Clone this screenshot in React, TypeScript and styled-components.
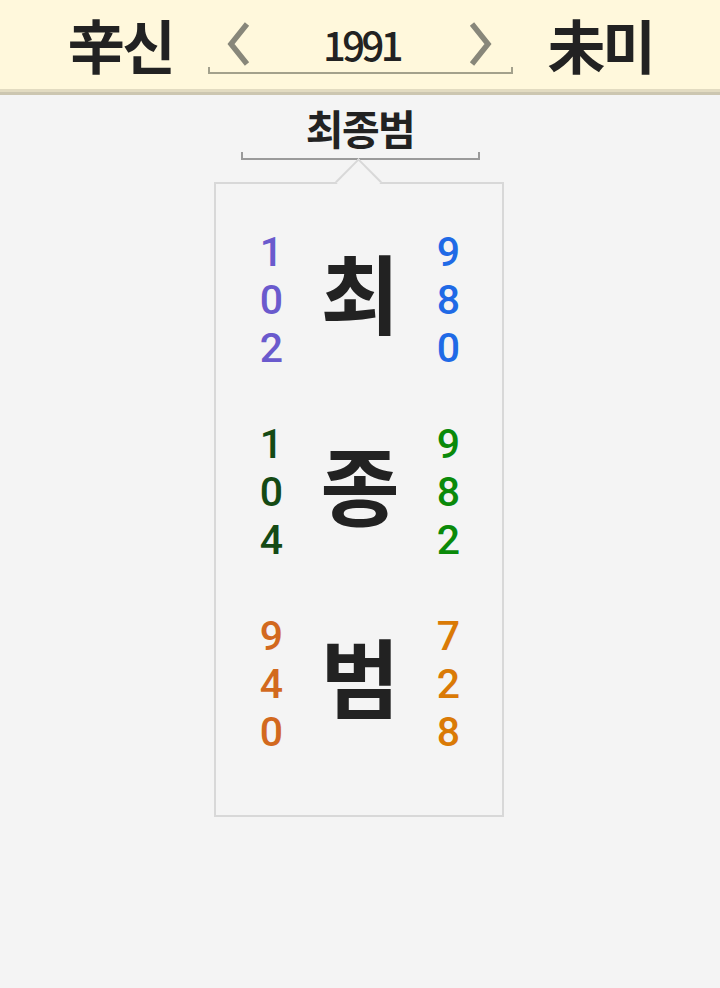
import React from "react";
import styled, { createGlobalStyle } from "styled-components";

const Global = createGlobalStyle`
  html, body { margin: 0; padding: 0; background: #f4f4f4; }
  body { font-family: "Noto Sans CJK KR", "Noto Sans", sans-serif; color: #222; }
`;

const Page = styled.div`
  width: 720px;
  min-height: 988px;
  background: #f4f4f4;
  display: flex;
  flex-direction: column;
  align-items: center;
`;

const Header = styled.header`
  align-self: stretch;
  height: 89px;
  background: #fff8dc;
  border-bottom: 3px solid #e2dbc1;
  box-shadow: 0 3px 0 #ccc6b0;
  display: flex;
  align-items: center;
  justify-content: center;
  gap: 35px;
`;

const Pillar = styled.div`
  font-size: 58px;
  font-weight: 700;
  line-height: 1;
  color: #222;
  letter-spacing: -3px;
  margin-top: -2px;
`;

const Nav = styled.div`
  width: 305px;
  display: flex;
  flex-direction: column;
  margin-top: 6px;
`;

const NavRow = styled.div`
  display: flex;
  align-items: center;
  justify-content: space-between;
  padding: 0 20px 0 19px;
  height: 46px;
`;

const Year = styled.div`
  font-size: 40px;
  line-height: 1;
  font-weight: 500;
  letter-spacing: -3.5px;
  color: #222;
  margin-left: 4px;
`;

const Bracket = styled.div<{ $w: number; $c: string; $h: number }>`
  width: ${(p) => p.$w}px;
  height: ${(p) => p.$h}px;
  box-sizing: border-box;
  border: 2px solid ${(p) => p.$c};
  border-top: none;
`;

const Title = styled.div`
  margin-top: 10px;
  font-size: 41px;
  font-weight: 700;
  line-height: 50px;
  letter-spacing: -1.5px;
  color: #222;
`;

const Card = styled.section`
  position: relative;
  margin-top: 22px;
  margin-right: 3px;
  width: 290px;
  height: 635px;
  box-sizing: border-box;
  border: 2px solid #d8d8d8;
  background: #f4f4f4;
  padding: 20px 33px 0 36px;
  display: flex;
  flex-direction: column;
  &::before {
    content: "";
    position: absolute;
    left: 50%;
    top: -19px;
    width: 33px;
    height: 33px;
    margin-left: -17px;
    box-sizing: border-box;
    background: #f4f4f4;
    border-top: 2px solid #d8d8d8;
    border-left: 2px solid #d8d8d8;
    transform: rotate(45deg);
  }
`;

const Row = styled.div`
  height: 192px;
  display: flex;
  align-items: center;
  justify-content: space-between;
`;

const Digits = styled.div<{ $c: string }>`
  display: flex;
  flex-direction: column;
  align-items: center;
  width: 40px;
  font-family: Roboto, "Noto Sans", sans-serif;
  font-size: 41px;
  line-height: 48px;
  font-weight: 500;
  color: ${(p) => p.$c};
`;

const Glyph = styled.div`
  font-size: 86px;
  font-weight: 700;
  line-height: 1;
  color: #222;
  white-space: nowrap;
  padding-bottom: 18px;
`;

const Chevron = ({ dir }: { dir: "l" | "r" }) => (
  <svg width="24" height="44" viewBox="0 0 24 44">
    <polyline
      points={dir === "l" ? "20,2 4,22 20,42" : "4,2 20,22 4,42"}
      fill="none"
      stroke="#88877a"
      strokeWidth="5.5"
    />
  </svg>
);

const rows = [
  { ch: "최", l: ["1", "0", "2"], r: ["9", "8", "0"], lc: "#6a5acd", rc: "#1f6ae6" },
  { ch: "종", l: ["1", "0", "4"], r: ["9", "8", "2"], lc: "#144a14", rc: "#0a8a0a" },
  { ch: "범", l: ["9", "4", "0"], r: ["7", "2", "8"], lc: "#d2691e", rc: "#da7a06" },
];

export default function App() {
  return (
    <Page>
      <Global />
      <Header>
        <Pillar>辛신</Pillar>
        <Nav>
          <NavRow>
            <Chevron dir="l" />
            <Year>1991</Year>
            <Chevron dir="r" />
          </NavRow>
          <Bracket $w={305} $h={7} $c="#a3a18c" />
        </Nav>
        <Pillar>未미</Pillar>
      </Header>
      <Title>최종범</Title>
      <Bracket $w={239} $h={8} $c="#9a9a9a" />
      <Card>
        {rows.map((r) => (
          <Row key={r.ch}>
            <Digits $c={r.lc}>
              {r.l.map((d, i) => (
                <span key={i}>{d}</span>
              ))}
            </Digits>
            <Glyph>{r.ch}</Glyph>
            <Digits $c={r.rc}>
              {r.r.map((d, i) => (
                <span key={i}>{d}</span>
              ))}
            </Digits>
          </Row>
        ))}
      </Card>
    </Page>
  );
}
